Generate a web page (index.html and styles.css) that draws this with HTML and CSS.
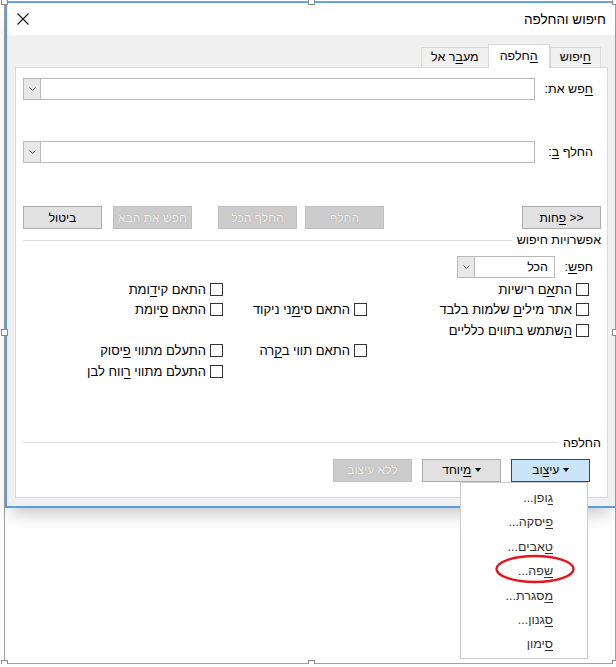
FILE: index.html
```html
<!DOCTYPE html>
<html dir="rtl" lang="he">
<head>
<meta charset="utf-8">
<link rel="stylesheet" href="styles.css">
</head>
<body>
<div class="frame">

  <div class="dialog">
    <div class="titlebar">
      <span class="title">חיפוש והחלפה</span>
      <svg class="close" width="12" height="12" viewBox="0 0 12 12"><path d="M0.5 0.5L11.5 11.5M11.5 0.5L0.5 11.5" stroke="#111" stroke-width="1.1" fill="none"/></svg>
    </div>

    <div class="content">
      <div class="tabs">
        <div class="tab"><u>ח</u>יפוש</div>
        <div class="tab active"><u>ה</u>חלפה</div>
        <div class="tab">מע<u>ב</u>ר אל</div>
      </div>

      <div class="panel">
        <div class="field">
          <div class="field-label"><u>ח</u>פש את:</div>
          <div class="combo">
            <span class="combo-text"></span>
            <span class="combo-btn"><svg width="7" height="4" viewBox="0 0 7 4"><path d="M0.5 0.5L3.5 3.5L6.5 0.5" stroke="#606060" fill="none"/></svg></span>
          </div>
        </div>
        <div class="field second">
          <div class="field-label">החלף <u>ב</u>:</div>
          <div class="combo">
            <span class="combo-text"></span>
            <span class="combo-btn"><svg width="7" height="4" viewBox="0 0 7 4"><path d="M0.5 0.5L3.5 3.5L6.5 0.5" stroke="#606060" fill="none"/></svg></span>
          </div>
        </div>

        <div class="actions">
          <button class="btn">&lt;&lt; <u>פ</u>חות</button>
          <div class="actions-main">
            <button class="btn off b-replace">החלף</button>
            <button class="btn off b-all">החלף הכל</button>
            <button class="btn off b-next">חפש את הבא</button>
            <button class="btn b-cancel">ביטול</button>
          </div>
        </div>

        <div class="group-title"><span>אפשרויות חיפוש</span></div>

        <div class="search-row">
          <div class="search-label">חפ<u>ש</u>:</div>
          <div class="combo small">
            <span class="combo-text">הכל</span>
            <span class="combo-btn"><svg width="7" height="4" viewBox="0 0 7 4"><path d="M0.5 0.5L3.5 3.5L6.5 0.5" stroke="#606060" fill="none"/></svg></span>
          </div>
        </div>

        <div class="options">
          <div class="opt"><span class="cb"></span><span>הת<u>א</u>ם רישיות</span></div>
          <div></div>
          <div class="opt"><span class="cb"></span><span>התאם קי<u>ד</u>ומת</span></div>

          <div class="opt"><span class="cb"></span><span>אתר מילי<u>ם</u> שלמות בלבד</span></div>
          <div class="opt"><span class="cb"></span><span>התאם סי<u>מ</u>ני ניקוד</span></div>
          <div class="opt"><span class="cb"></span><span>התאם <u>ס</u>יומת</span></div>

          <div class="opt"><span class="cb"></span><span><u>ה</u>שתמש בתווים כלליים</span></div>
          <div></div>
          <div></div>

          <div></div>
          <div class="opt"><span class="cb"></span><span>התאם תווי ב<u>ק</u>רה</span></div>
          <div class="opt"><span class="cb"></span><span>התעלם מתווי <u>פ</u>יסוק</span></div>

          <div></div>
          <div></div>
          <div class="opt"><span class="cb"></span><span>התעלם מתווי <u>ר</u>ווח לבן</span></div>
        </div>

        <div class="group-title replace"><span>החלפה</span></div>

        <div class="format-row">
          <button class="btn pressed"><span class="caret"></span> עי<u>צ</u>וב</button>
          <button class="btn"><span class="caret"></span> <u>מ</u>יוחד</button>
          <button class="btn off">ללא עיצוב</button>
        </div>
      </div>
    </div>
  </div>

  <ul class="menu">
    <li><u>ג</u>ופן...</li>
    <li><u>פ</u>יסקה...</li>
    <li><u>ט</u>אבים...</li>
    <li><u>ש</u>פה...</li>
    <li><u>מ</u>סגרת...</li>
    <li><u>ס</u>גנון...</li>
    <li><u>ס</u>ימון</li>
  </ul>

  <svg class="mark" width="82" height="32" viewBox="0 0 82 32"><ellipse cx="41" cy="16" rx="38.5" ry="13" stroke="#e3161d" stroke-width="2.4" fill="none"/></svg>

  <span class="handle tl"></span>
  <span class="handle tm"></span>
  <span class="handle tr"></span>
  <span class="handle ml"></span>
  <span class="handle mr"></span>
  <span class="handle bl"></span>
  <span class="handle bm"></span>
  <span class="handle br"></span>
</div>
</body>
</html>
```

FILE: styles.css
```css
body {
  margin: 0;
  background: #fff;
  font-family: "Liberation Sans", Arial, sans-serif;
  font-size: 12.5px;
  color: #000;
}
u { text-decoration: underline; text-underline-offset: 2px; }

.frame {
  position: relative;
  margin: 1px 0 0 1px;
  width: 610px;
  height: 661px;
  border: 1px solid #a0a0a0;
}

/* dialog window */
.dialog {
  width: 608px;
  border: 2px solid #5b9ddf;
  border-top-width: 1px;
  border-right: none;
  background: #f0f0f0;
  box-shadow: 0 12px 16px -6px rgba(0,0,0,0.22);
}
.titlebar {
  height: 32px;
  background: #fff;
  display: flex;
  align-items: center;
  justify-content: space-between;
  padding: 0 9px 0 10px;
}
.title { font-size: 13.5px; }
.close { display: block; }

.content { padding: 9px 7px 8px 8px; }

.tabs {
  display: flex;
  height: 23px;
  margin-right: 7px;
  position: relative;
  z-index: 1;
}
.tab {
  height: 20px;
  line-height: 19px;
  margin-top: 3px;
  padding: 0 9px;
  background: #f0f0f0;
  border: 1px solid #d9d9d9;
  border-bottom: none;
  box-sizing: border-box;
}
.tab + .tab { border-right: none; }
.tab.active {
  height: 24px;
  margin-top: 0;
  padding: 0 11px;
  background: #fff;
  border-right: 1px solid #d9d9d9;
  line-height: 22px;
}
.tab.active + .tab { border-right: none; }

.panel {
  height: 431px;
  box-sizing: border-box;
  background: #fff;
  border: 1px solid #d9d9d9;
  padding: 10px 6px 0 7px;
}

/* find / replace fields */
.field { display: flex; align-items: center; padding-right: 8px; }
.field.second { margin-top: 41px; }
.field-label { width: 58px; flex: none; }
.combo {
  flex: 1;
  height: 22px;
  box-sizing: border-box;
  border: 1px solid #b9b9b9;
  background: #fff;
  display: flex;
  align-items: center;
}
.combo-text { flex: 1; padding-right: 6px; }
.combo-btn {
  width: 17px;
  height: 20px;
  box-sizing: border-box;
  border-right: 1px solid #b9b9b9;
  background: #e8e8e8;
  display: flex;
  align-items: center;
  justify-content: center;
}
.combo-btn svg { display: block; }
.combo.small { flex: none; width: 98px; }

/* buttons */
.btn {
  font: inherit;
  font-size: 12px;
  color: #000;
  height: 23px;
  width: 79px;
  padding: 0;
  background: #e1e1e1;
  border: 1px solid #adadad;
  border-radius: 0;
}
.btn.off {
  background: #cccccc;
  border-color: #bfbfbf;
  color: #f4f4f4;
  text-shadow: 0 0 1px #8c8c8c;
}
.btn.pressed {
  background: #cce4f7;
  border-color: #005499;
}
.caret {
  display: inline-block;
  border-top: 4px solid #000;
  border-left: 3px solid transparent;
  border-right: 3px solid transparent;
  vertical-align: 2px;
}

.actions {
  display: flex;
  justify-content: space-between;
  margin-top: 43px;
}
.actions-main { display: flex; }
.b-all { margin-right: 8px; }
.b-next { margin-right: 26px; }
.b-cancel { margin-right: 11px; }

/* group headings with etched line */
.group-title {
  display: flex;
  align-items: center;
  margin-top: 4px;
  height: 14px;
}
.group-title::after {
  content: "";
  flex: 1;
  height: 1px;
  background: #dcdcdc;
  margin-right: 5px;
}
.group-title.replace { margin-top: 54px; }

.search-row {
  display: flex;
  align-items: center;
  margin-top: 9px;
  padding-right: 8px;
}
.search-label { width: 38px; }

.options {
  display: grid;
  grid-template-columns: 222px 144px 1fr;
  grid-auto-rows: 20.5px;
  margin-top: 1px;
  padding-right: 12px;
  font-size: 13px;
}
.opt { display: flex; align-items: center; }
.cb {
  width: 13px;
  height: 13px;
  box-sizing: border-box;
  border: 1px solid #333;
  background: #fff;
  margin-left: 4px;
  flex: none;
}

.format-row {
  display: flex;
  gap: 10px;
  margin-top: 9px;
  padding-right: 11px;
}

/* dropdown menu of the format button */
.menu {
  position: absolute;
  left: 455px;
  top: 480px;
  width: 128px;
  margin: 0;
  padding: 3px 34px 1px 0;
  box-sizing: border-box;
  list-style: none;
  background: #fff;
  border: 1px solid #cccccc;
  color: #333;
  font-size: 12.5px;
  z-index: 2;
}
.menu li { line-height: 24.4px; }

.mark {
  position: absolute;
  left: 489px;
  top: 551px;
  z-index: 3;
}

/* selection handles of the picture frame */
.handle {
  position: absolute;
  width: 5px;
  height: 5px;
  background: #fff;
  border: 1px solid #8a8a8a;
  z-index: 4;
}
.tl { left: -4px; top: -4px; }
.tm { left: 303px; top: -4px; }
.tr { left: 607px; top: -4px; }
.ml { left: -4px; top: 327px; }
.mr { left: 607px; top: 327px; }
.bl { left: -4px; top: 658px; }
.bm { left: 303px; top: 658px; }
.br { left: 607px; top: 658px; }
```
